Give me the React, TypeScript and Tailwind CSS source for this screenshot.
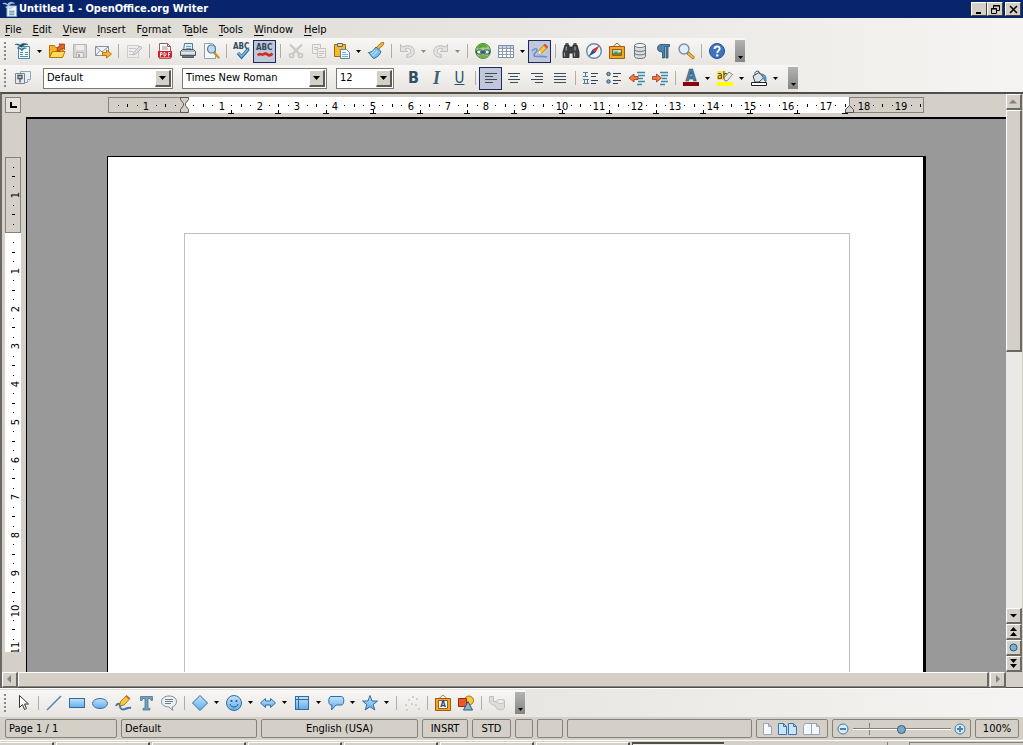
import { ReactNode, useEffect, useState } from "react";

interface IconProps {
    children: ReactNode
}

function Icon({ children }: IconProps) {
    return (
        <svg className="size-[18px] shrink-0 overflow-visible" viewBox="0 0 18 18" fill="none" aria-hidden="true">
            {children}
        </svg>
    )
}

/* ---------- Standard toolbar icons ---------- */

const WriterDoc = () => (
    <Icon>
        <path d="M4.500 4.500h11v12h-11z" fill="#f4f9fc" stroke="#4d86a8" />
        <path d="M1 2.500c2-1 4-.6 5 .8C8 1 11 .8 14 2.600c-2.500-.4-5 .2-6.500 2.800C5.800 3.500 3.500 2.400 1 2.500z" fill="#1f4f6e" stroke="#1f4f6e" strokeWidth=".5" />
        <path d="M3 6c2-.6 3.500-.2 4.500 1 1.500-1.500 3-1.700 5-.8-2.200.2-3.500.9-4.500 2.800C6.800 7.200 5 6.200 3 6z" fill="#2f6c8e" stroke="#2f6c8e" strokeWidth=".5" />
        <path d="M6 10.500h3M6 12.500h3M6 14.500h8M11 12.500h3M11 10.500h3" stroke="#5590b0" />
    </Icon>
)

const OpenFolder = () => (
    <Icon>
        <path d="M1.500 15.500v-12h5l1 2h7v3h1l-2 7z" fill="#f7b521" stroke="#b87406" />
        <path d="M1.500 15.500l3-6h12.500l-2.500 6z" fill="#ffdc5a" stroke="#b87406" />
        <path d="M9 9c0-3 1.500-5 3-5.500L11 2h5.500v5.500L15 6.300C13 7 12 8 11.500 9.500z" fill="#e2602c" stroke="#8c2c0c" strokeWidth=".7" />
    </Icon>
)

const Save = () => (
    <Icon>
        <path d="M2.500 2.500h13v13h-13z" fill="#d6d5d3" stroke="#b5b4b2" />
        <path d="M5 3h8v5H5z" fill="#efeeec" />
        <path d="M5.500 10.500h7v5h-7z" fill="#e9e8e6" stroke="#b5b4b2" />
        <path d="M7 12h2v3H7z" fill="#aaa" />
    </Icon>
)

const Mail = () => (
    <Icon>
        <path d="M1.500 4.500h13v9h-13z" fill="#f1f3f7" stroke="#8791a0" />
        <path d="M1.500 4.500L8 10l6.500-5.500M1.500 13.500l4.500-5" stroke="#8791a0" />
        <path d="M8.500 10.500h4V8l5 4-5 4v-2.500h-4z" fill="#f9b62a" stroke="#b36f05" strokeWidth=".9" />
    </Icon>
)

const EditFile = () => (
    <Icon>
        <path d="M2.500 3.500h11v12h-11z" fill="#efeeed" stroke="#cfcecc" />
        <path d="M4 6.500h7M4 9.500h4M4 12.500h5" stroke="#c8c7c5" />
        <path d="M8 13l1-3 6-6 2 2-6 6z" fill="#dddcda" stroke="#bcbbb9" />
    </Icon>
)

const Pdf = () => (
    <Icon>
        <path d="M3.500 1.500h8l3 3v12h-11z" fill="#fbfbfb" stroke="#a05a5a" />
        <path d="M11.500 1.500v3h3" stroke="#a05a5a" />
        <path d="M6 5h5M6 7h6" stroke="#999" />
        <path d="M2 9h14v6.500H2z" fill="#d3202a" />
        <path d="M4.500 14.500v-4h1.500v2H4.500M8 10.500v3.500h1l1-1v-1.500l-1-1zM12.500 14.500v-4h2M12.500 12.500h1.500" stroke="#fff" strokeWidth=".9" />
    </Icon>
)

const Printer = () => (
    <Icon>
        <path d="M5.500 1.500h8v7h-9z" fill="#d6ecf8" stroke="#5a7a8c" />
        <path d="M7 4.500h5M7 6.500h5" stroke="#6fa4c4" />
        <path d="M1.500 9.500l2-2h11l2 2v4h-15z" fill="#aebbc2" stroke="#4d5a62" />
        <path d="M2 10h14v2H2z" fill="#dfe5e8" />
        <path d="M3.500 13.500h11v2h-11z" fill="#6d7c85" stroke="#4d5a62" />
    </Icon>
)

const Preview = () => (
    <Icon>
        <path d="M2.500 1.500h8l3 3v12h-11z" fill="#f6fafd" stroke="#8aa1b3" />
        <path d="M12 10.500l4.500 5" stroke="#d39522" strokeWidth="2.500" strokeLinecap="round" />
        <circle cx="9.500" cy="7" r="4" fill="#b4dbf2" stroke="#5c7b90" strokeWidth="1.200" />
    </Icon>
)

const Spell = () => (
    <Icon>
        <text x="0" y="7" className="fill-[#2d4a5e] font-bold text-[8px]">ABC</text>
        <path d="M5 11l3.500 4 7-8" stroke="#2b6896" strokeWidth="3.400" />
        <path d="M5.500 11l3 3.500L15 7.500" stroke="#6dbcf0" strokeWidth="1.600" />
    </Icon>
)

const AutoSpell = () => (
    <Icon>
        <text x="0" y="8" className="fill-[#2d4a5e] font-bold text-[8px]">ABC</text>
        <path d="M2 13.500c2-3.500 3.500 0 5-1s3-1.500 4.500 0 3 1 5-1" stroke="#d3281d" strokeWidth="2.600" />
    </Icon>
)

const Cut = () => (
    <Icon>
        <path d="M3 2.500l9 9M15 2.500l-9 9" stroke="#c6c5c3" strokeWidth="2" />
        <circle cx="4.500" cy="13.500" r="2" stroke="#c6c5c3" strokeWidth="1.600" />
        <circle cx="13.500" cy="13.500" r="2" stroke="#c6c5c3" strokeWidth="1.600" />
    </Icon>
)

const Copy = () => (
    <Icon>
        <path d="M2.500 2.500h8v9h-8z" fill="#efeeed" stroke="#c4c3c1" />
        <path d="M4 5.500h4M4 7.500h3" stroke="#c4c3c1" />
        <path d="M7.500 6.500h8v9h-8z" fill="#efeeed" stroke="#c4c3c1" />
        <path d="M9 9.500h5M9 11.500h5M9 13.500h3" stroke="#c4c3c1" />
    </Icon>
)

const Paste = () => (
    <Icon>
        <path d="M1.500 2.500h11v12h-11z" fill="#f5b92c" stroke="#9f6b07" />
        <path d="M4.500 1.500h5v3h-5z" fill="#d7d7d7" stroke="#666" />
        <path d="M7.500 7.500h6l3 3v6h-9z" fill="#f0f8fe" stroke="#5b87a5" />
        <path d="M9 10.500h4M9 12.500h6M9 14.500h6" stroke="#7fb0d0" />
    </Icon>
)

const Brush = () => (
    <Icon>
        <path d="M11 6l4.500-4.500" stroke="#a86b0c" strokeWidth="3.400" strokeLinecap="round" />
        <path d="M11 6l4.500-4.500" stroke="#f7bb3d" strokeWidth="1.800" strokeLinecap="round" />
        <path d="M1.500 10.500c3 0 5-2 7.500-5.500l5 4.500c-1 3-3.500 6-7.500 7z" fill="#7cc0ef" stroke="#2c6a9a" />
        <path d="M4 12l4-4M5.500 14l5-5" stroke="#d6eefc" />
    </Icon>
)

const Undo = () => (
    <Icon>
        <path d="M2.500 2.500v7h7L7 7c3-1.500 6-.5 5.800 2.500-.2 2-2 3-4 3v3c4.500 0 7.500-2.500 7.500-6 0-5-6-7.500-11.500-4.500z" fill="#e4e3e1" stroke="#bebdbb" />
    </Icon>
)

const Redo = () => (
    <Icon>
        <path d="M15.500 2.500v7h-7L11 7c-3-1.500-6-.5-5.800 2.500.2 2 2 3 4 3v3c-4.500 0-7.500-2.500-7.500-6 0-5 6-7.500 11.500-4.500z" fill="#e4e3e1" stroke="#bebdbb" />
    </Icon>
)

const Link = () => (
    <Icon>
        <circle cx="9" cy="9" r="7.500" fill="#9ed08a" stroke="#4a8a3c" />
        <path d="M3 6c2-4 6-4.500 8-3.500l3 2.500c-3 1.500-4-.5-6 .5s-3 1.500-5 .5z" fill="#5fa52f" />
        <path d="M4 14c3-1.500 6-1 10 0-3 2.500-7 2.500-10 0z" fill="#6fb13a" />
        <rect x="2.500" y="8" width="6" height="4" rx="2" fill="#e8f2f4" stroke="#355766" strokeWidth="1.200" />
        <rect x="9.500" y="8" width="6" height="4" rx="2" fill="#e8f2f4" stroke="#355766" strokeWidth="1.200" />
        <path d="M6 10h6" stroke="#355766" strokeWidth="1.600" />
    </Icon>
)

const TableIcon = () => (
    <Icon>
        <path d="M1.500 3.500h15v12h-15z" fill="#fff" stroke="#7d8fa6" />
        <path d="M2 4h14v2H2z" fill="#c4d3e8" />
        <path d="M1.500 6.500h15M1.500 9.500h15M1.500 12.500h15M5.500 3.500v12M9.500 3.500v12M13.500 3.500v12" stroke="#8e9db2" />
    </Icon>
)

const DrawPencil = () => (
    <Icon>
        <path d="M1 9c3-4 7-2 4 1s-3 5 2 4.500 7 0 9 .5" stroke="#5c93d4" strokeWidth="1.600" />
        <path d="M7 12.500l1-4 6-6.500 3 3-6.500 6z" fill="#fbc83a" stroke="#a8700f" strokeWidth=".8" />
        <path d="M12.500 3.500L14 2l3 3-1.500 1.500z" fill="#d9534a" />
        <path d="M7 12.500l1-4 2.500 2.500z" fill="#fff3d0" />
    </Icon>
)

const Binoculars = () => (
    <Icon>
        <path d="M3 3h4v2h4V3h4l2 7v5.500h-6V11H7v4.500H1V10z" fill="#3b3f42" stroke="#1f2224" strokeWidth=".8" />
        <path d="M3.500 2h3M11.500 2h3" stroke="#555" strokeWidth="2" />
        <path d="M2.500 10.500v4M4.500 4.500l-.5 4M12.500 10.500v4M13 4.500v4" stroke="#9ba2a6" strokeWidth="1.200" />
    </Icon>
)

const Compass = () => (
    <Icon>
        <circle cx="9" cy="9" r="7.300" fill="#eef6fc" stroke="#6d87a0" strokeWidth="1.400" />
        <path d="M14.500 3.500L7.500 7.500l3 3z" fill="#dc2f28" />
        <path d="M3.500 14.500l4-7 3 3z" fill="#1f4f94" />
    </Icon>
)

const Gallery = () => (
    <Icon>
        <path d="M5 4.500L9 1l4 3.500" stroke="#8b6b3a" />
        <path d="M1.500 4.500h15v12h-15z" fill="#f2a62d" stroke="#a05c0a" />
        <path d="M4.500 7.500h9v6h-9z" fill="#9ad6f4" stroke="#a05c0a" />
        <path d="M5 13v-2l3-1.500 3 1.500 2-1v3z" fill="#4f9a34" />
        <circle cx="11" cy="9.300" r="1" fill="#ffe95c" />
    </Icon>
)

const Database = () => (
    <Icon>
        <path d="M3.500 3.500v11c0 2.700 11 2.700 11 0v-11z" fill="#d9dcde" stroke="#6f767b" />
        <path d="M3.500 7.500c0 2.500 11 2.500 11 0M3.500 11c0 2.500 11 2.500 11 0" stroke="#6f767b" />
        <ellipse cx="9" cy="3.500" rx="5.500" ry="2" fill="#f5f6f7" stroke="#6f767b" />
    </Icon>
)

const Paragraph = () => (
    <Icon>
        <path d="M7 2.500h8.500v2h-1.500v11.500h-2v-11.500h-1.500v11.500h-2V10C5 10 3.500 8.500 3.500 6.300S5 2.500 7 2.500z" fill="#4c86ae" stroke="#244c6a" strokeWidth=".8" />
    </Icon>
)

const Zoom = () => (
    <Icon>
        <path d="M11 11l5 4.500" stroke="#a3700e" strokeWidth="3.200" strokeLinecap="round" />
        <path d="M11.500 11.500l4.500 4" stroke="#f3ba3c" strokeWidth="1.700" strokeLinecap="round" />
        <circle cx="7" cy="7" r="5" fill="#dceffa" stroke="#7c8f9e" strokeWidth="1.400" />
    </Icon>
)

const Help = () => (
    <Icon>
        <circle cx="9" cy="9" r="7.500" fill="#3c74bf" stroke="#234f8e" />
        <path d="M6.500 7c0-3.500 5.500-3.300 5.200-.2C11.500 8.600 9.200 8.800 9.200 11" stroke="#fff" strokeWidth="1.900" />
        <circle cx="9.200" cy="13.400" r="1.200" fill="#fff" />
    </Icon>
)

/* ---------- Formatting icons ---------- */

const Styles = () => (
    <Icon>
        <path d="M6.500 2.500h10v8l-3 3h-7z" fill="#e9f1f6" stroke="#93a6b3" />
        <path d="M1.500 4.500h9v10h-9z" fill="#e4eaee" stroke="#75858f" />
        <path d="M4 6.500h4v3H4zM6 9.500v4" stroke="#44545e" strokeWidth="1.300" />
        <path d="M13.500 13.500v-3h3" fill="#fff" stroke="#93a6b3" />
    </Icon>
)

const Bold = () => <span className="text-[16px] leading-none font-bold text-[#2f5068]">B</span>
const Italic = () => <span className="font-['Liberation_Serif',serif] text-[18px] leading-none font-bold text-[#3f5f76] italic">I</span>
const Underline = () => <span className="text-[15px] leading-none text-[#2f5068] underline">U</span>

const AlignLeft = () => <Icon><path d="M3 4.500h12M3 7.500h8M3 10.500h12M3 13.500h8" stroke="#3c4c58" /></Icon>
const AlignCenter = () => <Icon><path d="M3 4.500h12M5 7.500h8M3 10.500h12M5 13.500h8" stroke="#3c4c58" /></Icon>
const AlignRight = () => <Icon><path d="M3 4.500h12M7 7.500h8M3 10.500h12M7 13.500h8" stroke="#3c4c58" /></Icon>
const Justify = () => <Icon><path d="M3 4.500h12M3 7.500h12M3 10.500h12M3 13.500h12" stroke="#3c4c58" /></Icon>

const Numbering = () => (
    <Icon>
        <path d="M1 3.500h5M3.500 3.500v4M1 7.500h5M1 10.500h6M2.500 10.500v4M5.500 10.500v4M1 14.500h6" stroke="#4d7f9e" />
        <path d="M9 4.500h7M9 7.500h5M9 11.500h7M9 14.500h5" stroke="#34444f" />
    </Icon>
)

const Bullets = () => (
    <Icon>
        <circle cx="3.500" cy="5" r="1.700" fill="#7fb1cf" stroke="#26506b" />
        <circle cx="3.500" cy="12.500" r="1.700" fill="#7fb1cf" stroke="#26506b" />
        <path d="M8 4.500h8M8 7.500h5M8 11.500h8M8 14.500h5" stroke="#34444f" />
    </Icon>
)

const Outdent = () => (
    <Icon>
        <path d="M9 3.500h8M10 6.500h7M10 9.500h5M10 12.500h7M9 15.500h5" stroke="#3f87ab" strokeWidth="1.500" />
        <path d="M1 9l5-4v2.500h4v3H6V13z" fill="#f17a4a" stroke="#a5350c" strokeWidth=".8" />
    </Icon>
)

const Indent = () => (
    <Icon>
        <path d="M9 3.500h8M10 6.500h7M11 9.500h5M10 12.500h7M9 15.500h5" stroke="#3f87ab" strokeWidth="1.500" />
        <path d="M10.500 9l-5-4v2.500h-4v3h4V13z" fill="#f17a4a" stroke="#a5350c" strokeWidth=".8" />
    </Icon>
)

const FontColor = () => (
    <Icon>
        <text x="9" y="12" textAnchor="middle" className="fill-[#4b86ad] stroke-[#20455f] stroke-[0.6px] text-[15px] font-bold">A</text>
        <path d="M1 13h16v4H1z" fill="#8b0010" />
    </Icon>
)

const Highlight = () => (
    <Icon>
        <path d="M1 2h9v9H1z" fill="#fbe04a" />
        <text x="1" y="10" className="fill-[#333] text-[10px]">ab</text>
        <path d="M9 12l-1-3 5-6 3.500 2.500-5 6z" fill="#e9e9e9" stroke="#777" strokeWidth=".9" />
        <path d="M1 13h16v4H1z" fill="#ffff00" />
    </Icon>
)

const Background = () => (
    <Icon>
        <path d="M3 7l6-3.500 5 5-5 4.500H5z" fill="#dfe4e8" stroke="#3b4a55" />
        <path d="M5 6c-1-5 5-5 5-1" stroke="#3b4a55" />
        <path d="M11 5c4 0 5.500 2.500 5 7.500-2 0-1.500-2.500-3-4z" fill="#5ba3d6" stroke="#285c85" strokeWidth=".7" />
        <path d="M1.500 13.500h15v3h-15z" fill="#fff" stroke="#222" />
    </Icon>
)

/* ---------- Drawing icons ---------- */

const shape = { fill: "url(#blue)", stroke: "#2f6ca5" }

const Pointer = () => <Icon><path d="M5.500 1.500v12l3-3 2 5 2-1-2-4.500h4z" fill="#fff" stroke="#333" /></Icon>
const Line = () => <Icon><path d="M2 16L16 2" stroke="#5083b3" strokeWidth="1.500" /></Icon>
const Rect = () => <Icon><rect x="1.500" y="4.500" width="15" height="9" {...shape} /></Icon>
const Ellipse = () => <Icon><ellipse cx="9" cy="9.500" rx="7.500" ry="5" {...shape} /></Icon>

const Freeform = () => (
    <Icon>
        <path d="M2 12c1-3 4-3 4 0s2 4 5 3 4-2 6-1" stroke="#3f78ae" strokeWidth="2" />
        <path d="M5.500 12l1-4.500 6-6 3.500 3-6 6.500z" fill="#fbc83a" stroke="#96600c" strokeWidth=".8" />
        <path d="M11.500 2.500l1-1 3.500 3-1 1z" fill="#d65a4c" />
    </Icon>
)

const TextTool = () => (
    <Icon>
        <path d="M3.500 2.500h12v4h-1.500l-1-2h-2v9.500l2 .5v1.500H6v-1.500l2-.5V4.500H6l-1 2H3.500z" fill="#6ea0c0" stroke="#4d7690" strokeWidth=".8" />
    </Icon>
)

const Callout = () => (
    <Icon>
        <path d="M9 2c4 0 7.500 2 7.500 5.500S14 12.500 12 13l1 3.500-4-3.500C5 13 1.500 11 1.500 7.500S5 2 9 2z" fill="#edf1f4" stroke="#7b8d9a" />
        <path d="M5 5.500h8M5 7.500h8M5 9.500h6" stroke="#6b8191" />
    </Icon>
)

const Diamond = () => <Icon><path d="M9 1.500L16.500 9 9 16.500 1.500 9z" {...shape} /></Icon>

const Smiley = () => (
    <Icon>
        <circle cx="9" cy="9" r="7.500" {...shape} />
        <path d="M5 10c1 4 7 4 8 0" stroke="#245b90" />
        <circle cx="6.500" cy="7" r="1.100" fill="#245b90" />
        <circle cx="11.500" cy="7" r="1.100" fill="#245b90" />
    </Icon>
)

const BlockArrow = () => <Icon><path d="M1.500 9l5-4.500V7h5V4.500l5 4.500-5 4.500V11h-5v2.500z" {...shape} /></Icon>

const Flowchart = () => (
    <Icon>
        <rect x="2.500" y="2.500" width="13" height="13" {...shape} />
        <path d="M5.500 2.500v13M2.500 5.500h13" stroke="#2f6ca5" />
    </Icon>
)

const CalloutShape = () => (
    <Icon>
        <path d="M4 2.500h10.500c3 0 3 8.500 0 8.500H9l-4.500 5 .5-5H4c-3 0-3-8.500 0-8.500z" {...shape} />
    </Icon>
)

const Star = () => <Icon><path d="M9 1.500l2 5.500h5.500l-4.300 3.500 1.600 5.500L9 12.700 4.200 16l1.600-5.500L1.500 7H7z" {...shape} /></Icon>

const Points = () => (
    <Icon>
        <path d="M2 10h2v2H2zM5 5h2v2H5zM9 2h2v2H9zM13 4h2v2h-2zM15 14h2v2h-2zM8 9h2v2H8zM3 15h2v2H3zM12 10h2v2h-2z" fill="#cfcecc" />
    </Icon>
)

const Fontwork = () => (
    <Icon>
        <path d="M5 4.500L9 1l4 3.500" stroke="#9a8a70" />
        <path d="M1.500 4.500h15v12h-15z" fill="#f2a62d" stroke="#a05c0a" />
        <path d="M4.500 6.500h9v8h-9z" fill="#fff" stroke="#a05c0a" />
        <text x="9" y="13" textAnchor="middle" className="fill-[#264c6a] text-[8px] font-bold">A</text>
    </Icon>
)

const ShapesGallery = () => (
    <Icon>
        <circle cx="12" cy="6.500" r="4.500" fill="#f9c93c" stroke="#a5750c" />
        <path d="M1.500 4.500h8v8h-8z" fill="#e8592d" stroke="#9c2e0c" />
        <path d="M11 7.500l4.500 8.500h-9z" fill="#8eb4d0" stroke="#2f5877" />
    </Icon>
)

const Extrusion = () => (
    <Icon>
        <path d="M1.500 2.500h4v5h4v-1.500h7v8c-2 2.500-7 2.500-8 0l-2-3h-2l-3-3z" fill="#dedddb" stroke="#c0bfbd" />
        <ellipse cx="12.500" cy="7.500" rx="4" ry="2" fill="#efeeed" stroke="#c0bfbd" />
    </Icon>
)

/* ---------- Toolbar parts ---------- */

interface ToolProps {
    label: string
    icon: ReactNode
    on?: boolean
}

function Tool({ label, icon, on = false }: ToolProps) {
    const [pressed, setPressed] = useState<boolean>(on)
    return (
        <button
            type="button"
            aria-label={label}
            title={label}
            className={`flex h-[23px] w-[23px] shrink-0 items-center justify-center ${pressed ? "border border-[#1c2a63] bg-[#c1c6d9]" : ""}`}
            onClick={() => on && setPressed(!pressed)}
        >
            {icon}
        </button>
    )
}

function Caret({ className = "text-black" }: { className?: string }) {
    return (
        <svg className={`h-[3px] w-[5px] ${className}`} viewBox="0 0 5 3" aria-hidden="true">
            <path d="M0 0h5L2.500 3z" fill="currentColor" />
        </svg>
    )
}

function Drop({ label, off = false }: { label: string, off?: boolean }) {
    return (
        <button type="button" aria-label={label} className="flex h-[23px] w-[11px] shrink-0 items-center justify-center">
            <Caret className={off ? "text-[#8c8a87]" : "text-black"} />
        </button>
    )
}

const Sep = () => (
    <div className="flex w-2 shrink-0 justify-center">
        <div className="h-3.5 w-px bg-[#b0ada7]" />
    </div>
)

const Overflow = () => (
    <button type="button" aria-label="More controls" className="ml-[7px] flex h-[22px] w-2.5 shrink-0 items-end justify-center bg-linear-to-b from-[#b4b4b4] to-[#858585] pb-[3px]">
        <Caret />
    </button>
)

function Toolbar({ label, children }: { label: string, children: ReactNode }) {
    return (
        <div role="toolbar" aria-label={label} className="flex h-[27px] w-fit items-center bg-linear-to-b from-[#f8f7f5] to-[#e7e4e0] pb-px">
            <div className="ml-1 h-[18px] w-[7px] shrink-0">
                <div className="h-full w-0 border-l-2 border-dotted border-[#8b8882]" />
            </div>
            {children}
        </div>
    )
}

function Combo({ label, value, options, className }: { label: string, value: string, options: string[], className: string }) {
    return (
        <div className={`flex h-[21px] shrink-0 border border-[#7d7a74] bg-white p-px ${className}`}>
            <select aria-label={label} defaultValue={value} className="min-w-0 flex-1 appearance-none bg-transparent pl-0.5 outline-none">
                {options.map((o) => <option key={o}>{o}</option>)}
            </select>
            <div className="pointer-events-none flex w-4 items-center justify-center border-t border-r-2 border-b-2 border-l border-t-white border-r-[#5c5a56] border-b-[#5c5a56] border-l-white bg-[#d4d0c8]">
                <svg className="h-1 w-[7px]" viewBox="0 0 7 4" aria-hidden="true"><path d="M0 0h7L3.500 4z" fill="#000" /></svg>
            </div>
        </div>
    )
}

/* ---------- Rulers ---------- */

const CM = 37.75

function HorizontalRuler() {
    const zero = 77
    const quarters = Array.from({ length: 86 }, (_, i) => i - 7)
    const tabs = Array.from({ length: 14 }, (_, i) => zero + (i + 1) * CM * 1.25)
    return (
        <svg className="h-[22px] w-[819px] shrink-0" viewBox="0 0 819 22" shapeRendering="crispEdges" aria-hidden="true">
            <rect x="1.500" y="3.500" width="815" height="15" fill="#d4d0c8" stroke="#85827c" />
            <rect x="77" y="3" width="665" height="16" fill="#fff" />
            {quarters.map((q) => {
                const x = Math.round(zero + q * CM / 4)
                if (q === 0) return null
                if (q % 4 === 0) return <text key={q} x={x} y="16" textAnchor="middle" className="text-[11px]">{Math.abs(q / 4)}</text>
                return <rect key={q} x={x} y={q % 2 === 0 ? 10 : 11} width="1" height={q % 2 === 0 ? 3 : 1} />
            })}
            {tabs.map((x) => <path key={x} d={`M${Math.round(x) - 3} 19.500h6M${Math.round(x) + .5} 16v4`} stroke="#000" />)}
            <path d="M73.500 3.500h8v2l-3 4v2l3 4v3h-8v-3l3-4v-2l-3-4z" fill="#d4d0c8" stroke="#555" shapeRendering="auto" />
            <path d="M742.500 3v9" stroke="#85827c" />
            <path d="M742.500 11.500l4 4v3h-8v-3z" fill="#d4d0c8" stroke="#555" shapeRendering="auto" />
        </svg>
    )
}

function VerticalRuler() {
    const [height, setHeight] = useState<number>(window.innerHeight - 250)
    useEffect(() => {
        const onResize = () => setHeight(window.innerHeight - 250)
        window.addEventListener("resize", onResize)
        return () => window.removeEventListener("resize", onResize)
    }, [])

    const zero = 76
    // only the marks that are in view
    const count = Math.max(0, Math.floor((height - zero) / CM * 4) + 8)
    const quarters = Array.from({ length: count }, (_, i) => i - 7)
    return (
        <svg className="h-full w-4" shapeRendering="crispEdges" aria-hidden="true">
            <rect x="0" y="76" width="16" height="100%" fill="#fff" />
            <rect x=".5" y=".5" width="15" height="75" fill="#d4d0c8" stroke="#85827c" />
            {quarters.map((q) => {
                const y = Math.round(zero + q * CM / 4)
                if (q === 0) return null
                if (q % 4 === 0) return <text key={q} transform={`translate(14 ${y}) rotate(-90)`} textAnchor="middle" className="text-[11px]">{Math.abs(q / 4)}</text>
                return <rect key={q} x={q % 2 === 0 ? 7 : 8} y={y} width={q % 2 === 0 ? 3 : 1} height="1" />
            })}
        </svg>
    )
}

/* ---------- Scroll bars ---------- */

function ScrollButton({ label, children }: { label: string, children: ReactNode }) {
    return (
        <button type="button" aria-label={label} className="flex size-4 shrink-0 items-center justify-center border-t border-r-2 border-b-2 border-l border-t-white border-r-[#6b6963] border-b-[#6b6963] border-l-white bg-[#d4d0c8]">
            <svg className="size-[11px]" viewBox="0 0 11 11" aria-hidden="true">{children}</svg>
        </button>
    )
}

function StatusBox({ className = "", children }: { className?: string, children?: ReactNode }) {
    return (
        <div className={`flex h-[19px] items-center rounded-xs border border-[#85827c] ${className}`}>
            {children}
        </div>
    )
}

function CaptionButton({ label, className = "", children }: { label: string, className?: string, children: ReactNode }) {
    return (
        <button type="button" aria-label={label} className={`flex h-[14px] w-4 items-center justify-center border border-t-white border-r-[#404040] border-b-[#404040] border-l-white bg-[#d4d0c8] ${className}`}>
            <svg className="size-[11px]" viewBox="0 0 11 11" fill="none" stroke="#000" aria-hidden="true">{children}</svg>
        </button>
    )
}

// [text before the access key, access key, rest]
const menus = [
    ["", "F", "ile"],
    ["", "E", "dit"],
    ["", "V", "iew"],
    ["", "I", "nsert"],
    ["F", "o", "rmat"],
    ["T", "a", "ble"],
    ["", "T", "ools"],
    ["", "W", "indow"],
    ["", "H", "elp"],
]

export default function App() {
    const [zoom, setZoom] = useState<number>(100)
    return (
        <div className="flex h-screen flex-col overflow-hidden bg-[#d4d0c8] font-['DejaVu_Sans_Condensed','DejaVu_Sans',sans-serif] text-[11px] leading-4 text-black">
            <svg className="absolute size-0" aria-hidden="true">
                <linearGradient id="blue" x1="0" y1="0" x2="0" y2="1">
                    <stop offset="0" stopColor="#c3e3fb" />
                    <stop offset="1" stopColor="#62aceb" />
                </linearGradient>
            </svg>

            {/* Title bar */}
            <header className="flex h-[18px] shrink-0 items-center bg-[#08246b] px-0.5 text-white">
                <svg className="size-4" viewBox="0 0 18 18" fill="none" aria-hidden="true">
                    <path d="M5.500 5.500h11v12h-11z" fill="#eef6fb" stroke="#6f9dbb" />
                    <path d="M1 3c2-1 4-.6 5 .8C8 1 11 .8 14 2.600 11 2.500 9 3 7.500 5.500 6 4 3.500 3 1 3zM4 7c2-.6 3.500-.2 4.500 1 1.500-1.500 3-1.700 4.500-.8-2 .2-3 .9-4 2.400C8 8.200 6 7.200 4 7z" fill="#9cc7e2" stroke="#c9e2f2" strokeWidth=".6" />
                    <path d="M8 11.500h6M8 13.500h6M8 15.500h6" stroke="#47799b" />
                </svg>
                <h1 className="flex-1 pl-px font-bold">Untitled 1 - OpenOffice.org Writer</h1>
                <CaptionButton label="Minimize"><path d="M2 9h5" strokeWidth="2" /></CaptionButton>
                <CaptionButton label="Restore">
                    <path d="M3.500 4V1.500h6v5H7M3 2h7M1.500 4.500h5v5h-5zM1 5h6" />
                </CaptionButton>
                <CaptionButton label="Close" className="ml-0.5"><path d="M2 2l7 7M9 2L2 9" strokeWidth="1.600" /></CaptionButton>
            </header>

            <div className="shrink-0 bg-linear-to-r from-[#dbd8d1] to-[#f5f4f2]">
                {/* Menu bar */}
                <nav className="flex h-5 items-center gap-px pt-[3px]">
                    {menus.map(([pre, key, rest]) => (
                        <button key={pre + key + rest} type="button" className="px-[5px]">
                            {pre}<span className="underline underline-offset-2">{key}</span>{rest}
                        </button>
                    ))}
                </nav>

                <Toolbar label="Standard">
                    <Tool label="New" icon={<WriterDoc />} />
                    <Drop label="New document type" />
                    <Tool label="Open" icon={<OpenFolder />} />
                    <Tool label="Save" icon={<Save />} />
                    <Tool label="Document as E-mail" icon={<Mail />} />
                    <Sep />
                    <Tool label="Edit File" icon={<EditFile />} />
                    <Sep />
                    <Tool label="Export as PDF" icon={<Pdf />} />
                    <Tool label="Print" icon={<Printer />} />
                    <Tool label="Page Preview" icon={<Preview />} />
                    <Sep />
                    <Tool label="Spelling" icon={<Spell />} />
                    <Tool label="AutoSpellcheck" icon={<AutoSpell />} on />
                    <Sep />
                    <Tool label="Cut" icon={<Cut />} />
                    <Tool label="Copy" icon={<Copy />} />
                    <Tool label="Paste" icon={<Paste />} />
                    <Drop label="Paste options" />
                    <Tool label="Format Paintbrush" icon={<Brush />} />
                    <Sep />
                    <Tool label="Undo" icon={<Undo />} />
                    <Drop label="Undo list" off />
                    <Tool label="Redo" icon={<Redo />} />
                    <Drop label="Redo list" off />
                    <Sep />
                    <Tool label="Hyperlink" icon={<Link />} />
                    <Tool label="Table" icon={<TableIcon />} />
                    <Drop label="Table size" />
                    <Tool label="Show Draw Functions" icon={<DrawPencil />} on />
                    <Sep />
                    <Tool label="Find & Replace" icon={<Binoculars />} />
                    <Tool label="Navigator" icon={<Compass />} />
                    <Tool label="Gallery" icon={<Gallery />} />
                    <Tool label="Data Sources" icon={<Database />} />
                    <Tool label="Nonprinting Characters" icon={<Paragraph />} />
                    <Tool label="Zoom" icon={<Zoom />} />
                    <Sep />
                    <Tool label="Help" icon={<Help />} />
                    <Overflow />
                </Toolbar>

                <Toolbar label="Formatting">
                    <Tool label="Styles and Formatting" icon={<Styles />} />
                    <Combo label="Apply Style" value="Default" options={["Default", "Heading 1", "Text body"]} className="ml-[9px] w-[130px]" />
                    <Combo label="Font Name" value="Times New Roman" options={["Times New Roman", "Arial", "Tahoma"]} className="ml-[9px] w-[145px]" />
                    <Combo label="Font Size" value="12" options={["10", "12", "14"]} className="mr-2 ml-[9px] w-[58px]" />
                    <Tool label="Bold" icon={<Bold />} />
                    <Tool label="Italic" icon={<Italic />} />
                    <Tool label="Underline" icon={<Underline />} />
                    <Sep />
                    <Tool label="Align Left" icon={<AlignLeft />} on />
                    <Tool label="Centered" icon={<AlignCenter />} />
                    <Tool label="Align Right" icon={<AlignRight />} />
                    <Tool label="Justified" icon={<Justify />} />
                    <Sep />
                    <Tool label="Numbering On/Off" icon={<Numbering />} />
                    <Tool label="Bullets On/Off" icon={<Bullets />} />
                    <Tool label="Decrease Indent" icon={<Outdent />} />
                    <Tool label="Increase Indent" icon={<Indent />} />
                    <Sep />
                    <Tool label="Font Color" icon={<FontColor />} />
                    <Drop label="Font colors" />
                    <Tool label="Highlighting" icon={<Highlight />} />
                    <Drop label="Highlight colors" />
                    <Tool label="Background Color" icon={<Background />} />
                    <Drop label="Background colors" />
                    <Overflow />
                </Toolbar>
            </div>

            {/* Workspace */}
            <main className="flex min-h-0 flex-1 flex-col border-t-2 border-b border-l-2 border-[#504e4a] border-l-[#6a6863]">
                <div className="flex min-h-0 flex-1">
                    <div className="flex min-w-0 flex-1 flex-col">
                        <div className="flex h-[23px] shrink-0">
                            <div className="w-[25px] shrink-0 pt-[3px] pl-[3px]">
                                <button type="button" aria-label="Tab type" className="flex size-4 items-center justify-center border border-[#85827c] bg-[#e4e1db]">
                                    <svg className="size-2" viewBox="0 0 8 8" aria-hidden="true"><path d="M1 1h2v4h5v2H1z" /></svg>
                                </button>
                            </div>
                            <div className="flex min-w-0 flex-1 justify-center overflow-hidden">
                                <HorizontalRuler />
                            </div>
                        </div>
                        <div className="flex min-h-0 flex-1">
                            <div className="mt-10 mb-5 w-6 shrink-0 overflow-hidden pl-[3px]">
                                <VerticalRuler />
                            </div>
                            <div className="flex min-w-0 flex-1 items-start justify-center overflow-hidden border-t-2 border-l border-black bg-[#999] pt-[37px]">
                                <div className="h-[1057px] w-[819px] shrink-0 border-t border-r-3 border-l border-black bg-white py-[76px] pr-[73px] pl-[76px]">
                                    <div role="textbox" aria-label="Document" contentEditable suppressContentEditableWarning className="h-full border border-[#c0c0c0] font-['Liberation_Serif',serif] text-base outline-none" />
                                </div>
                            </div>
                        </div>
                    </div>

                    {/* Vertical scroll bar */}
                    <div className="mr-px flex w-4 shrink-0 flex-col bg-[#ebe9e5]">
                        <ScrollButton label="Scroll up"><path d="M1 7.500h8L5 3.500z" fill="#85827c" /></ScrollButton>
                        <div className="min-h-0 flex-1">
                            <div className="h-[48.5%] border-t border-r-2 border-b-2 border-l border-t-white border-r-[#6b6963] border-b-[#6b6963] border-l-white bg-[#d4d0c8]" />
                        </div>
                        <ScrollButton label="Scroll down"><path d="M2 4h7L5.500 7.500z" /></ScrollButton>
                        <ScrollButton label="Previous page"><path d="M2 5h7L5.500 1zM2 10h7L5.500 6z" /></ScrollButton>
                        <ScrollButton label="Navigation"><circle cx="5.500" cy="5.500" r="3.500" fill="#79b0d4" stroke="#2c5877" /></ScrollButton>
                        <ScrollButton label="Next page"><path d="M2 1h7L5.500 5zM2 6h7L5.500 10z" /></ScrollButton>
                    </div>
                </div>

                {/* Horizontal scroll bar */}
                <div className="flex h-[15px] shrink-0 pr-[17px]">
                    <ScrollButton label="Scroll left"><path d="M7 1v8L3 5z" fill="#85827c" /></ScrollButton>
                    <div className="mr-px flex-1 border-t border-r-2 border-b border-l border-t-white border-r-[#6b6963] border-b-[#85827c] border-l-white" />
                    <ScrollButton label="Scroll right"><path d="M4 1v8l4-4z" fill="#85827c" /></ScrollButton>
                </div>
            </main>

            {/* Drawing toolbar */}
            <div className="flex h-[29px] shrink-0 items-center border-t border-white bg-linear-to-r from-[#dbd8d1] to-[#f5f4f2]">
                <Toolbar label="Drawing">
                    <Tool label="Select" icon={<Pointer />} />
                    <Sep />
                    <Tool label="Line" icon={<Line />} />
                    <Tool label="Rectangle" icon={<Rect />} />
                    <Tool label="Ellipse" icon={<Ellipse />} />
                    <Tool label="Freeform Line" icon={<Freeform />} />
                    <Tool label="Text" icon={<TextTool />} />
                    <Tool label="Callout" icon={<Callout />} />
                    <Sep />
                    <Tool label="Basic Shapes" icon={<Diamond />} />
                    <Drop label="More basic shapes" />
                    <Tool label="Symbol Shapes" icon={<Smiley />} />
                    <Drop label="More symbol shapes" />
                    <Tool label="Block Arrows" icon={<BlockArrow />} />
                    <Drop label="More block arrows" />
                    <Tool label="Flowcharts" icon={<Flowchart />} />
                    <Drop label="More flowcharts" />
                    <Tool label="Callouts" icon={<CalloutShape />} />
                    <Drop label="More callouts" />
                    <Tool label="Stars" icon={<Star />} />
                    <Drop label="More stars" />
                    <Sep />
                    <Tool label="Points" icon={<Points />} />
                    <Sep />
                    <Tool label="Fontwork Gallery" icon={<Fontwork />} />
                    <Tool label="From File" icon={<ShapesGallery />} />
                    <Sep />
                    <Tool label="Extrusion On/Off" icon={<Extrusion />} />
                    <Overflow />
                </Toolbar>
            </div>

            {/* Status bar */}
            <footer className="flex h-[23px] shrink-0 items-center gap-1 pr-1 pl-[5px]">
                <StatusBox className="w-28 pl-[3px]">Page 1 / 1</StatusBox>
                <StatusBox className="w-[136px] pl-[3px]">Default</StatusBox>
                <StatusBox className="w-[157px] justify-center">English (USA)</StatusBox>
                <StatusBox className="w-[46px] justify-center">INSRT</StatusBox>
                <StatusBox className="w-[39px] justify-center">STD</StatusBox>
                <StatusBox className="w-[18px]" />
                <StatusBox className="w-[26px]" />
                <StatusBox className="flex-1" />
                <StatusBox className="w-[72px] justify-center">
                    <button type="button" aria-label="Page layout">
                        <svg className="h-3 w-[58px]" viewBox="0 0 58 12" fill="#f4f7fb" stroke="#98a5b5" aria-hidden="true">
                            <path d="M.5.5h5l3 3v8h-8zM5.500.5v3h3" />
                            <path d="M15.500.5h5l3 3v8h-8zM20.500.5v3h3M25.500.5h5l3 3v8h-8zM30.500.5v3h3" fill="#cbe5fa" stroke="#3b78b4" />
                            <path d="M43.500.5h-2l-1 3v8h8v-11zM48.500.5h5l3 3v8h-8zM53.500.5v3h3" />
                        </svg>
                    </button>
                </StatusBox>
                <StatusBox className="w-[139px] justify-between px-1">
                    <button type="button" aria-label="Zoom out" onClick={() => setZoom(zoom - 10)}>
                        <svg className="size-3" viewBox="0 0 12 12" aria-hidden="true">
                            <circle cx="6" cy="6" r="5" fill="#d8ecfa" stroke="#447aa5" /><path d="M3 5h6v2H3z" fill="#4c82ad" />
                        </svg>
                    </button>
                    <div className="relative flex h-4 w-[98px] items-center">
                        <div className="absolute left-4 h-3 w-px bg-[#85827c]" />
                        <input
                            type="range"
                            aria-label="Zoom factor"
                            min={0}
                            max={200}
                            value={zoom}
                            onChange={(e) => setZoom(Number(e.target.value))}
                            className="relative h-3 w-full appearance-none bg-transparent [&::-webkit-slider-runnable-track]:h-0.5 [&::-webkit-slider-runnable-track]:border-t [&::-webkit-slider-runnable-track]:border-[#85827c] [&::-webkit-slider-runnable-track]:bg-white [&::-webkit-slider-thumb]:-mt-1 [&::-webkit-slider-thumb]:size-[9px] [&::-webkit-slider-thumb]:appearance-none [&::-webkit-slider-thumb]:rounded-full [&::-webkit-slider-thumb]:border [&::-webkit-slider-thumb]:border-[#2c5877] [&::-webkit-slider-thumb]:bg-[#79a9c8]"
                        />
                    </div>
                    <button type="button" aria-label="Zoom in" onClick={() => setZoom(zoom + 10)}>
                        <svg className="size-3" viewBox="0 0 12 12" aria-hidden="true">
                            <circle cx="6" cy="6" r="5" fill="#d8ecfa" stroke="#447aa5" /><path d="M3 5h2V3h2v2h2v2H7v2H5V7H3z" fill="#4c82ad" />
                        </svg>
                    </button>
                </StatusBox>
                <StatusBox className="w-11 justify-center">{zoom}%</StatusBox>
            </footer>

            {/* Top edge of the desktop task bar */}
            <div className="flex h-[5px] shrink-0 gap-0.5 border-t border-white pt-px">
                <div className="w-[54px] border-t border-r-2 border-white border-r-[#504e4a]" />
                {[1, 2, 3, 4, 5, 6].map((n) => (
                    <div key={n} className="w-[94px] border-t border-r-2 border-l border-white border-r-[#504e4a]" />
                ))}
                <div className="w-[92px] border-t-2 border-l border-[#504e4a] bg-[#ebe9e5]" />
                <div className="flex-1" />
                <div className="w-5 border-l border-[#85827c]" />
                <div className="w-[114px] border-t border-l border-[#85827c]" />
            </div>
        </div>
    )
}
